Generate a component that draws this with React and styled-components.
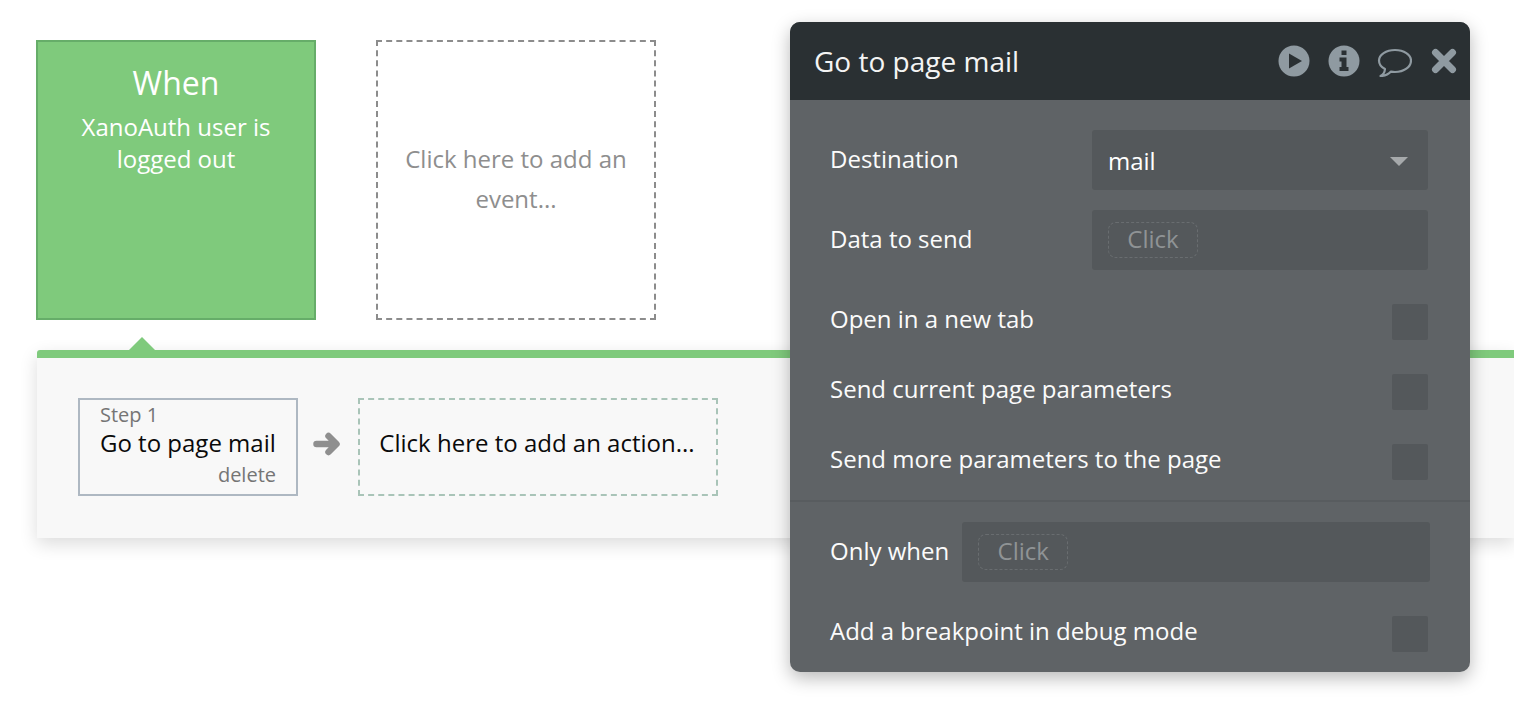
import React from "react"
import styled, { createGlobalStyle } from "styled-components"

const GlobalStyle = createGlobalStyle`
  html, body {
    margin: 0;
    padding: 0;
    background: #fff;
    font-family: "Open Sans", "Liberation Sans", sans-serif;
  }
`

const Page = styled.div`
  position: relative;
  width: 1514px;
  height: 702px;
  overflow: hidden;
  padding-top: 40px;
  box-sizing: border-box;
`

const EventRow = styled.div`
  display: flex;
  gap: 60px;
  margin-left: 36px;
`

const WhenCard = styled.div`
  width: 280px;
  height: 280px;
  box-sizing: border-box;
  background: #7fca7c;
  border: 2px solid #66ad69;
  color: #fff;
  text-align: center;
  padding-top: 19px;
`

const WhenTitle = styled.div`
  font-size: 32px;
  line-height: 44px;
`

const WhenText = styled.div`
  font-size: 24px;
  line-height: 32px;
  margin-top: 6px;
`

const AddEventCard = styled.div`
  width: 280px;
  height: 280px;
  box-sizing: border-box;
  border: 2px dashed #8c8c8c;
  color: #8e8e8e;
  font-size: 24px;
  line-height: 40px;
  text-align: center;
  padding: 97px 20px 0;
`

const ActionStrip = styled.div`
  position: relative;
  margin: 30px 0 0 37px;
  height: 188px;
  box-sizing: border-box;
  background: #f8f8f8;
  border-top: 8px solid #7fca7c;
  border-top-left-radius: 3px;
  box-shadow: 0 6px 18px rgba(0, 0, 0, 0.14);
  display: flex;
  align-items: flex-start;
  padding: 40px 0 0 41px;
`

const StripPointer = styled.div`
  position: absolute;
  top: -21px;
  left: 91px;
  width: 0;
  height: 0;
  border-left: 14px solid transparent;
  border-right: 14px solid transparent;
  border-bottom: 14px solid #7fca7c;
`

const StepCard = styled.div`
  width: 220px;
  height: 98px;
  box-sizing: border-box;
  border: 2px solid #aeb8c2;
  padding: 2px 20px 0;
  display: flex;
  flex-direction: column;
`

const StepLabel = styled.div`
  font-size: 20px;
  line-height: 26px;
  color: #757575;
`

const StepName = styled.div`
  font-size: 24px;
  line-height: 32px;
  margin-top: -1px;
  color: #0a0a0a;
  white-space: nowrap;
`

const StepDelete = styled.div`
  font-size: 20px;
  line-height: 30px;
  margin-top: 1px;
  color: #757575;
  text-align: right;
`

const ArrowIcon = styled.svg`
  width: 28px;
  height: 28px;
  margin: 32px 17px 0 15px;
  flex: none;
`

const AddActionCard = styled.div`
  width: 360px;
  height: 98px;
  box-sizing: border-box;
  border: 2px dashed #a9c4b8;
  color: #0a0a0a;
  font-size: 24px;
  padding: 0 2px 10px 0;
  display: flex;
  align-items: center;
  justify-content: center;
  white-space: nowrap;
`

const Panel = styled.div`
  position: absolute;
  left: 790px;
  top: 22px;
  width: 680px;
  height: 650px;
  border-radius: 10px;
  overflow: hidden;
  background: #5f6366;
  box-shadow: 0 6px 18px rgba(0, 0, 0, 0.28);
  color: #fff;
`

const PanelHeader = styled.div`
  height: 78px;
  box-sizing: border-box;
  background: #2a3033;
  display: flex;
  align-items: center;
  padding: 0 13px 0 24px;
`

const PanelTitle = styled.div`
  flex: 1;
  font-size: 28px;
  color: #f4f4f4;
`

const HeaderIcons = styled.div`
  display: flex;
  align-items: center;
`

const HeaderIcon = styled.svg`
  width: ${(p) => p.$w || 32}px;
  height: 32px;
  margin-left: ${(p) => p.$gap || 18}px;
  display: block;
`

const PanelBody = styled.div`
  padding: 30px 42px 0 40px;
`

const FieldRow = styled.div`
  display: flex;
  align-items: center;
  justify-content: space-between;
  height: 60px;
  margin-bottom: 20px;
`

const CheckGroup = styled.div`
  display: flex;
  flex-direction: column;
  gap: 34px;
  margin-top: 34px;
`

const CheckRow = styled.div`
  display: flex;
  align-items: center;
  justify-content: space-between;
  height: 36px;
`

const RowLabel = styled.div`
  font-size: 24px;
  color: #fbfbfb;
  white-space: nowrap;
  padding-bottom: ${(p) => p.$lift || 0}px;
`

const InputBox = styled.div`
  width: 336px;
  height: 60px;
  box-sizing: border-box;
  background: #54585b;
  border-radius: 3px;
  display: flex;
  align-items: center;
  padding: 0 16px;
  font-size: 24px;
  color: #fff;
`

const SelectValue = styled.div`
  flex: 1;
`

const Caret = styled.div`
  width: 0;
  height: 0;
  margin: 2px 4px 0 0;
  border-left: 9px solid transparent;
  border-right: 9px solid transparent;
  border-top: 9px solid #a6a9ab;
`

const ClickChip = styled.div`
  width: 90px;
  height: 36px;
  box-sizing: border-box;
  border: 1px dashed #696d70;
  border-radius: 8px;
  padding-bottom: 4px;
  color: #8f9395;
  font-size: 24px;
  display: flex;
  align-items: center;
  justify-content: center;
`

const Checkbox = styled.div`
  width: 36px;
  height: 36px;
  background: #54585b;
  border-radius: 2px;
`

const Divider = styled.div`
  height: 2px;
  background: #585c5f;
  margin: 20px 0;
`

const OnlyWhenRow = styled.div`
  display: flex;
  align-items: center;
  padding: 0 40px;
  height: 60px;
  margin-bottom: 34px;
`

const OnlyWhenBox = styled(InputBox)`
  width: 468px;
  margin-left: 13px;
`

const BottomRow = styled.div`
  display: flex;
  align-items: center;
  justify-content: space-between;
  height: 36px;
  padding: 0 42px 0 40px;
`

const App = () => {
  return (
    <Page>
      <GlobalStyle />
      <EventRow>
        <WhenCard>
          <WhenTitle>When</WhenTitle>
          <WhenText>
            XanoAuth user is
            <br />
            logged out
          </WhenText>
        </WhenCard>
        <AddEventCard>Click here to add an event...</AddEventCard>
      </EventRow>

      <ActionStrip>
        <StripPointer />
        <StepCard>
          <StepLabel>Step 1</StepLabel>
          <StepName>Go to page mail</StepName>
          <StepDelete>delete</StepDelete>
        </StepCard>
        <ArrowIcon viewBox="0 0 28 28">
          <path
            d="M3.500 14H23M15.500 6L23.500 14L15.500 22"
            fill="none"
            stroke="#8f8f8f"
            strokeWidth="6.500"
            strokeLinecap="round"
            strokeLinejoin="round"
          />
        </ArrowIcon>
        <AddActionCard>Click here to add an action...</AddActionCard>
      </ActionStrip>

      <Panel>
        <PanelHeader>
          <PanelTitle>Go to page mail</PanelTitle>
          <HeaderIcons>
            <HeaderIcon viewBox="0 0 32 32">
              <circle cx="16" cy="16" r="15.500" fill="#8f9aa1" />
              <path d="M11 8.500L24 16L11 23.500Z" fill="#2a3033" />
            </HeaderIcon>
            <HeaderIcon viewBox="0 0 32 32">
              <circle cx="16" cy="16" r="15.500" fill="#8f9aa1" />
              <path
                d="M13.500 5.500H18.500V10H13.500ZM11.500 12.500H18.500V22H20.500V26H11.500V22H13.500V16.500H11.500Z"
                fill="#2a3033"
              />
            </HeaderIcon>
            <HeaderIcon viewBox="0 0 36 32" $w={36} $gap={16}>
              <path
                d="M19 5C10 5 3 9.800 3 15.500C3 19.200 5.500 22.300 9 24C8.800 26.500 7.500 29.500 4.500 31C9.500 31 13 28.800 15 26.600C16.500 26.900 17.700 27 19 27C28 27 35 22 35 15.500C35 9.800 28 5 19 5Z"
                fill="none"
                stroke="#8f9aa1"
                strokeWidth="2.200"
                strokeLinejoin="round"
              />
            </HeaderIcon>
            <HeaderIcon viewBox="0 0 26 32" $w={26} $gap={19}>
              <path
                d="M4.500 7.500L21.500 24.500M21.500 7.500L4.500 24.500"
                fill="none"
                stroke="#8f9aa1"
                strokeWidth="7"
                strokeLinecap="round"
              />
            </HeaderIcon>
          </HeaderIcons>
        </PanelHeader>

        <PanelBody>
          <FieldRow>
            <RowLabel $lift={4}>Destination</RowLabel>
            <InputBox>
              <SelectValue>mail</SelectValue>
              <Caret />
            </InputBox>
          </FieldRow>
          <FieldRow>
            <RowLabel $lift={4}>Data to send</RowLabel>
            <InputBox>
              <ClickChip>Click</ClickChip>
            </InputBox>
          </FieldRow>
          <CheckGroup>
            <CheckRow>
              <RowLabel $lift={8}>Open in a new tab</RowLabel>
              <Checkbox />
            </CheckRow>
            <CheckRow>
              <RowLabel $lift={8}>Send current page parameters</RowLabel>
              <Checkbox />
            </CheckRow>
            <CheckRow>
              <RowLabel $lift={8}>Send more parameters to the page</RowLabel>
              <Checkbox />
            </CheckRow>
          </CheckGroup>
        </PanelBody>

        <Divider />

        <OnlyWhenRow>
          <RowLabel $lift={4}>Only when</RowLabel>
          <OnlyWhenBox>
            <ClickChip>Click</ClickChip>
          </OnlyWhenBox>
        </OnlyWhenRow>

        <BottomRow>
          <RowLabel $lift={8}>Add a breakpoint in debug mode</RowLabel>
          <Checkbox />
        </BottomRow>
      </Panel>
    </Page>
  )
}

export default App
